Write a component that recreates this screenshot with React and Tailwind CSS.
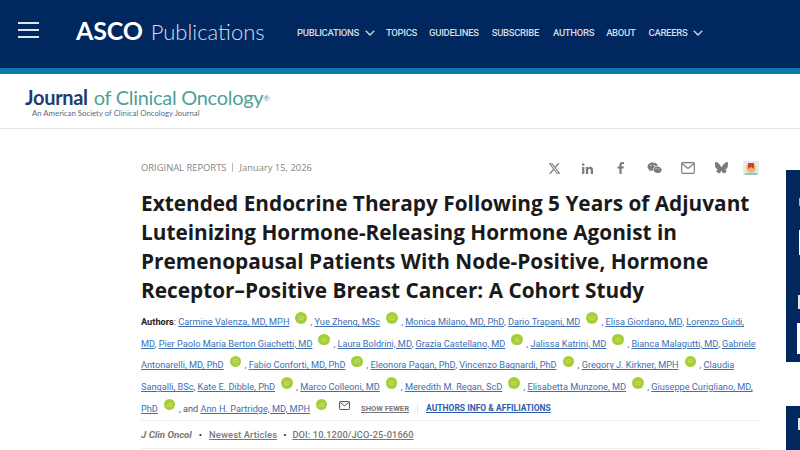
import React from "react";

const Orcid = ({ flex }) => (
  <span className={"inline-flex items-center justify-center w-[11.5px] h-[11.5px] rounded-full bg-[#a6ce39] text-[6px] text-[#cfe38f] leading-none ml-[6px] mr-[3.5px] " + (flex ? "-mt-[8px]" : "align-[5px]")}>iD</span>
);
const A = ({ children }) => <a className="text-[#3d6fb4] underline">{children}</a>;

const lineCls = "whitespace-nowrap h-[21.7px] leading-[21.7px]";

export default function App() {
  return (
    <div className="w-[800px] h-[450px] overflow-hidden bg-white relative" style={{ fontFamily: "Roboto, sans-serif" }}>
      <header className="h-[74px] bg-[#00285e] border-b-[6px] border-[#0c7aa8] flex items-center pb-[8px]">
        <div className="ml-[18px] w-[21px] flex flex-col gap-[4.5px]">
          <div className="h-[2.5px] bg-[#dfe5ee]" />
          <div className="h-[2.5px] bg-[#dfe5ee]" />
          <div className="h-[2.5px] bg-[#dfe5ee]" />
        </div>
        <div className="ml-[37px] w-[190px] mt-[2px] flex items-baseline whitespace-nowrap text-white" style={{ fontFamily: "Lato, sans-serif" }}>
          <span className="text-[25px] font-bold tracking-[-0.2px]">ASCO</span>
          <span className="text-[22px] font-light text-[#d5dde9] ml-[8px]">Publications</span>
        </div>
        <nav className="ml-[31px] mt-[6px] flex items-center text-[9.5px] tracking-[-0.3px] font-medium text-[#d3dbe8] whitespace-nowrap">
          <span>PUBLICATIONS</span>
          <Chevron className="ml-[6px]" />
          <span className="ml-[11px]">TOPICS</span>
          <span className="ml-[12px]">GUIDELINES</span>
          <span className="ml-[13px]">SUBSCRIBE</span>
          <span className="ml-[14px]">AUTHORS</span>
          <span className="ml-[12px]">ABOUT</span>
          <span className="ml-[13px]">CAREERS</span>
          <Chevron className="ml-[6px]" />
        </nav>
      </header>

      <div className="h-[55px] border-b border-[#e3e3e3] pl-[25px] pt-[11px]" style={{ fontFamily: "Lato, sans-serif" }}>
        <div className="flex items-baseline whitespace-nowrap text-[20px] leading-[24px] tracking-[-0.3px]">
          <span className="text-[#1d3d6e] font-bold">Journal</span>
          <span className="text-[#4f9f98] ml-[6px]">of Clinical Oncology</span>
          <span className="text-[#4f9f98] text-[8px] self-start mt-[1px]">®</span>
        </div>
        <div className="ml-[7px] -mt-[1px] text-[7.8px] leading-[8px] text-[#5a6b85]">An American Society of Clinical Oncology Journal</div>
      </div>

      <main className="w-[620px] ml-[141px] pt-[31px]">
        <div className="flex items-center h-[16px]">
          <div className="flex items-center text-[9.4px] text-[#858585] whitespace-nowrap" style={{ fontFamily: "'Open Sans', sans-serif" }}>
            <span className="font-medium">ORIGINAL REPORTS</span>
            <span className="w-px h-[9px] bg-[#bbbbbb] mx-[6px]" />
            <span className="font-medium">January 15, 2026</span>
          </div>
          <Social />
        </div>

        <h1 className="mt-[13px] text-[20.8px] leading-[29px] font-bold text-[#1a1a1a]" style={{ fontFamily: "'Open Sans', sans-serif" }}>
          <div className="whitespace-nowrap">Extended Endocrine Therapy Following 5 Years of Adjuvant</div>
          <div className="whitespace-nowrap">Luteinizing Hormone-Releasing Hormone Agonist in</div>
          <div className="whitespace-nowrap">Premenopausal Patients With Node-Positive, Hormone</div>
          <div className="whitespace-nowrap">Receptor–Positive Breast Cancer: A Cohort Study</div>
        </h1>

        <div className="mt-[6px] text-[9.2px] text-[#3d6fb4]">
          <div className={lineCls}>
            <span className="font-bold text-[#222]">Authors</span><span className="text-[#555]">: </span>
            <A>Carmine Valenza, MD, MPH</A><Orcid />, <A>Yue Zheng, MSc</A><Orcid />, <A>Monica Milano, MD, PhD</A>, <A>Dario Trapani, MD</A><Orcid />, <A>Elisa Giordano, MD</A>, <A>Lorenzo Guidi,</A>
          </div>
          <div className={lineCls}>
            <A>MD</A>, <A>Pier Paolo Maria Berton Giachetti, MD</A><Orcid />, <A>Laura Boldrini, MD</A>, <A>Grazia Castellano, MD</A><Orcid />, <A>Jalissa Katrini, MD</A><Orcid />, <A>Bianca Malagutti, MD</A>, <A>Gabriele</A>
          </div>
          <div className={lineCls}>
            <A>Antonarelli, MD, PhD</A><Orcid />, <A>Fabio Conforti, MD, PhD</A><Orcid />, <A>Eleonora Pagan, PhD</A>, <A>Vincenzo Bagnardi, PhD</A><Orcid />, <A>Gregory J. Kirkner, MPH</A><Orcid />, <A>Claudia</A>
          </div>
          <div className={lineCls}>
            <A>Sangalli, BSc</A>, <A>Kate E. Dibble, PhD</A><Orcid />, <A>Marco Colleoni, MD</A><Orcid />, <A>Meredith M. Regan, ScD</A><Orcid />, <A>Elisabetta Munzone, MD</A><Orcid />, <A>Giuseppe Curigliano, MD,</A>
          </div>
          <div className={lineCls + " flex items-center"}>
            <A>PhD</A><Orcid flex /><span className="text-[#555] whitespace-pre">, and </span><A>Ann H. Partridge, MD, MPH</A><Orcid flex />
            <svg width="11" height="9" viewBox="0 0 11 9" fill="none" stroke="#444" strokeWidth="0.9" className="ml-[8px] -mt-[7px]"><rect x="0.5" y="0.5" width="10" height="8" rx="0.8" /><path d="M0.8 1.2 5.5 4.8l4.700-3.600" /></svg>
            <span className="ml-[11px] text-[7.6px] font-bold text-[#777] underline">SHOW FEWER</span>
            <span className="w-px h-[9px] bg-[#e5e5e5] mx-[8px]" />
            <span className="text-[8.5px] font-bold text-[#2a5db0] underline">AUTHORS INFO &amp; AFFILIATIONS</span>
          </div>
        </div>

        <div className="mt-[1px] w-[620px] h-[29px] border-y border-[#eeeeee] flex items-center whitespace-nowrap text-[9.3px] text-[#777] font-medium">
          <span className="italic font-bold text-[9.7px]">J Clin Oncol</span>
          <span className="mx-[7px] text-[#333]">•</span>
          <span className="underline tracking-[0.15px]">Newest Articles</span>
          <span className="mx-[6px] text-[#333]">•</span>
          <span className="underline tracking-[0.1px]">DOI: 10.1200/JCO-25-01660</span>
        </div>
      </main>

      <div className="absolute left-[786px] top-[170px] w-[14px] h-[192px] bg-[#00285e] overflow-hidden">
        <div className="absolute left-[13px] top-[60px] w-[1px] h-[25px] bg-white" />
        <div className="absolute left-[12px] top-[125px] w-[2px] h-[14px] bg-[#dfe5ee]" />
        <div className="absolute left-[11px] top-[153px] w-[3px] h-[31px] bg-white" />
        <div className="absolute left-[13px] top-[28px] w-[1px] h-[8px] bg-[#9fb3cc]" />
      </div>
      <div className="absolute left-[786px] top-[406px] w-[14px] h-[44px] bg-[#00285e] overflow-hidden">
        <div className="absolute left-[12px] top-[12px] w-[2px] h-[12px] bg-[#dfe5ee]" />
      </div>
    </div>
  );
}

function Chevron({ className }) {
  return (
    <svg width="10" height="6" viewBox="0 0 10 6" fill="none" stroke="#d3dbe8" strokeWidth="1.3" className={className}>
      <path d="M0.8 0.8 5 5 9.2 0.8" />
    </svg>
  );
}

function Social() {
  const c = "#7b7b7b";
  return (
    <div className="ml-auto mr-[2px] flex items-center">
      <svg width="13" height="13" viewBox="0 0 24 24" fill={c} className="mr-[20px]"><path d="M18.244 2.25h3.308l-7.227 8.26 8.502 11.24H16.17l-5.214-6.817L4.99 21.75H1.68l7.73-8.835L1.254 2.25H8.08l4.713 6.231zm-1.161 17.52h1.833L7.084 4.126H5.117z" /></svg>
      <svg width="13" height="13" viewBox="0 0 24 24" fill={c} className="mr-[20px]"><path d="M2 9h4.2v13H2zM4.1 2.2a2.4 2.4 0 1 1 0 4.8 2.4 2.4 0 0 1 0-4.8zM9 9h4v1.9c.7-1.2 2.2-2.2 4.2-2.2 4.2 0 5 2.7 5 6.3V22H18v-6.2c0-1.6-.1-3.4-2.2-3.4s-2.6 1.6-2.6 3.3V22H9z" /></svg>
      <svg width="13" height="14" viewBox="0 0 24 24" fill={c} className="mr-[20px]"><path d="M14 23V13h3.6l.6-4H14V6.5c0-1.2.4-2 2-2h2.4V1.1C18 1 16.700.9 15.300.9 12.200.9 10 2.800 10 6.200V9H6.500v4H10v10z" /></svg>
      <svg width="15" height="13" viewBox="0 0 24 21" fill={c} className="mr-[19px]"><path d="M9 1C4.400 1 .8 4 .8 7.700c0 2.100 1.200 4 3.100 5.200L3.200 15l2.500-1.300c1 .3 2.100.5 3.300.5h.7a6 6 0 0 1-.3-1.800c0-3.500 3.400-6.300 7.500-6.300h.6C16.700 3 13.200 1 9 1zM6.200 6.500a1 1 0 1 1 0-2 1 1 0 0 1 0 2zm5.600 0a1 1 0 1 1 0-2 1 1 0 0 1 0 2z" /><path d="M23.300 12.500c0-3-3-5.300-6.500-5.300s-6.500 2.400-6.500 5.300 3 5.300 6.500 5.300c.8 0 1.500-.1 2.200-.3l2 1.100-.5-1.800c1.900-1 3.300-2.500 3.300-4.300zm-8.800-.8a.9.9 0 1 1 0-1.800.9.9 0 0 1 0 1.800zm4.500 0a.9.9 0 1 1 0-1.800.9.900 0 0 1 0 1.800z" /></svg>
      <svg width="14" height="12" viewBox="0 0 14 12" fill="none" stroke={c} strokeWidth="1.200" className="mr-[20px]"><rect x="0.700" y="0.700" width="12.600" height="10.600" rx="1" /><path d="M1 1.500 7 6.500l6-5" /></svg>
      <svg width="13" height="12" viewBox="0 0 24 22" fill={c} className="mr-[15px]"><path d="M5.200 1.500C8 3.600 10.900 7.800 12 10c1.100-2.200 4-6.400 6.800-8.500C20.800 0 24-1.100 24 2.500c0 .7-.4 6-.7 6.900-.8 3-3.900 3.800-6.600 3.300 4.700.8 5.900 3.500 3.300 6.100-4.900 5-7-1.300-7.600-2.900-.1-.3-.2-.4-.4-.4s-.2.100-.4.400c-.6 1.600-2.700 7.900-7.600 2.900-2.600-2.600-1.400-5.300 3.300-6.100-2.700.5-5.800-.3-6.600-3.300C.4 8.500 0 3.200 0 2.500 0-1.100 3.200 0 5.200 1.500z" /></svg>
      <svg width="16" height="14" viewBox="0 0 16 14"><rect x="0" y="0" width="16" height="14" rx="1" fill="#e8e8e4" /><circle cx="8" cy="7" r="5" fill="#e6c068" /><path d="M5 2h6v6L8 6 5 8z" fill="#d8383e" /><path d="M2 14v-2h12v2z" fill="#9cc0c8" /></svg>
    </div>
  );
}
